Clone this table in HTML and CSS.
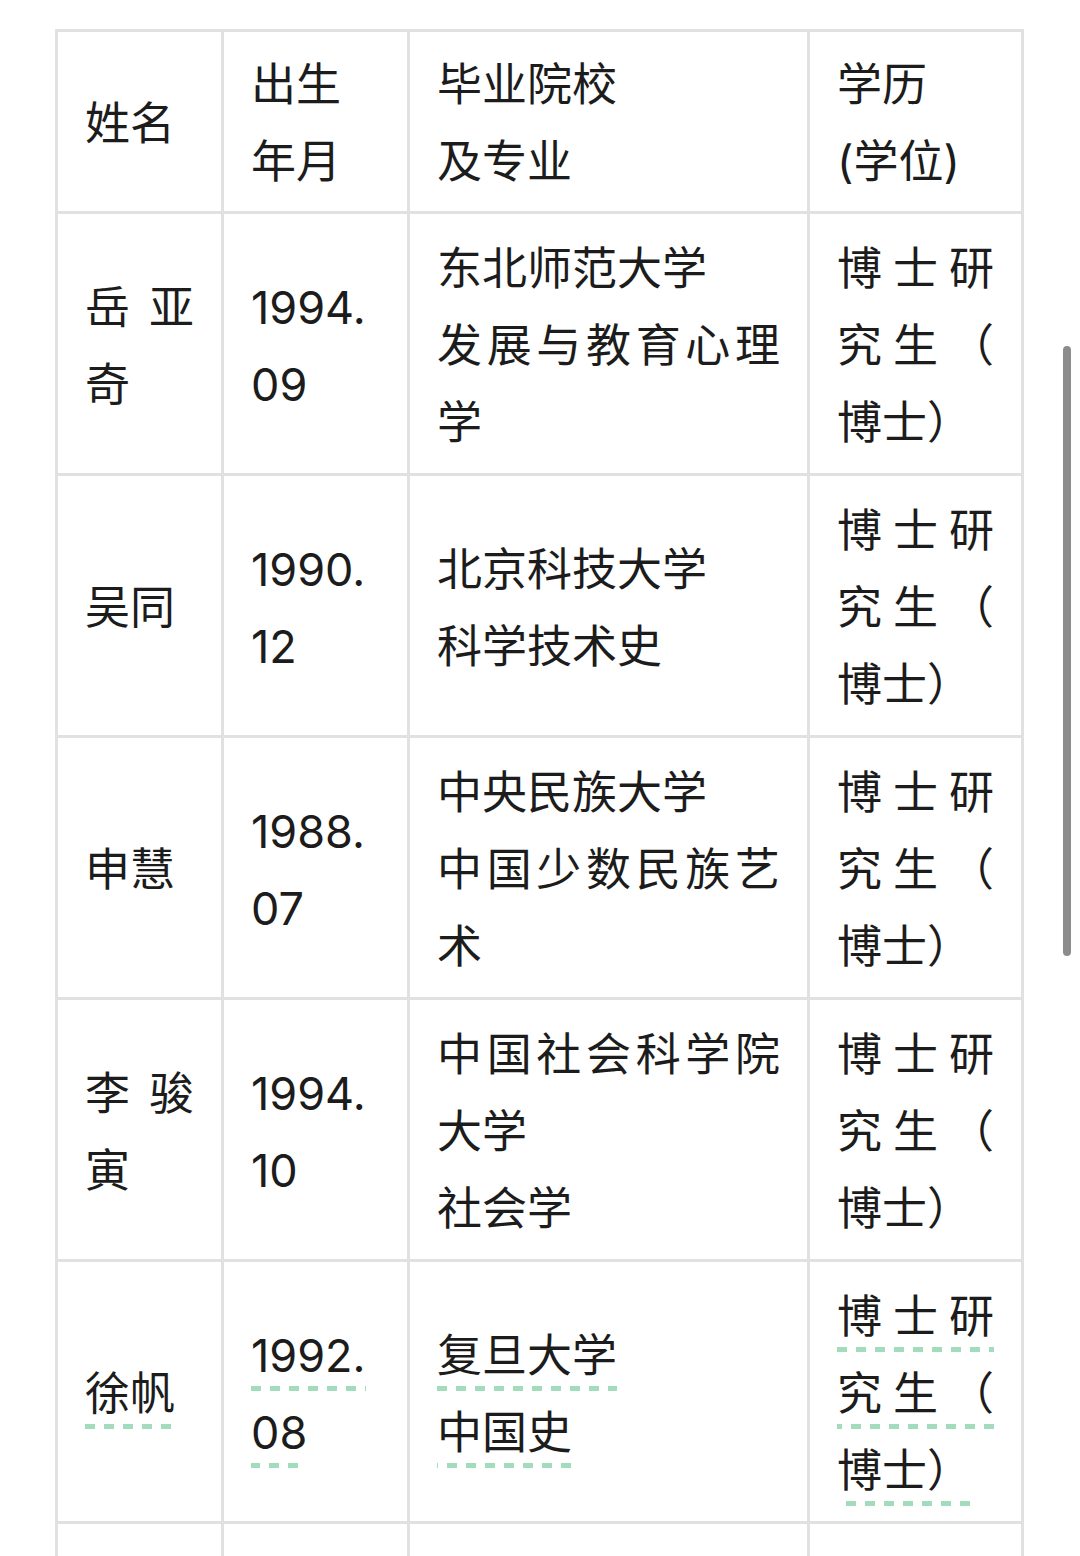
FILE: index.html
```html
<!DOCTYPE html>
<html lang="zh-CN">
<head>
<meta charset="utf-8">
<title>人员名单</title>
<link rel="stylesheet" href="styles.css">
</head>
<body>
<div class="page">
  <table class="roster">
    <colgroup>
      <col class="c-name">
      <col class="c-birth">
      <col class="c-school">
      <col class="c-degree">
    </colgroup>
    <thead>
      <tr>
        <th>姓名</th>
        <th>出生<br>年月</th>
        <th>毕业院校<br>及专业</th>
        <th>学历<br>(学位)</th>
      </tr>
    </thead>
    <tbody>
      <tr>
        <td>岳亚奇</td>
        <td>1994.<wbr>09</td>
        <td>东北师范大学<br>发展与教育心理学</td>
        <td class="deg">博士研究生（博士）</td>
      </tr>
      <tr>
        <td>吴同</td>
        <td>1990.<wbr>12</td>
        <td>北京科技大学<br>科学技术史</td>
        <td class="deg">博士研究生（博士）</td>
      </tr>
      <tr>
        <td>申慧</td>
        <td>1988.<wbr>07</td>
        <td>中央民族大学<br>中国少数民族艺术</td>
        <td class="deg">博士研究生（博士）</td>
      </tr>
      <tr>
        <td>李骏寅</td>
        <td>1994.<wbr>10</td>
        <td>中国社会科学院大学<br>社会学</td>
        <td class="deg">博士研究生（博士）</td>
      </tr>
      <tr>
        <td><span class="hl">徐帆</span></td>
        <td><span class="hl">1992.<wbr>08</span></td>
        <td><span class="hl">复旦大学<br>中国史</span></td>
        <td class="deg"><span class="hl">博士研究生（博士）</span></td>
      </tr>
      <tr class="more">
        <td></td>
        <td></td>
        <td></td>
        <td></td>
      </tr>
    </tbody>
  </table>
</div>
<div class="scrollbar"></div>
</body>
</html>
```

FILE: styles.css
```css
html, body {
  margin: 0;
  padding: 0;
  background: #ffffff;
}

body {
  font-family: "Inter", "Noto Sans CJK SC", sans-serif;
  color: #1c1c1c;
}

.page {
  padding: 29px 0 0 55px;
}

.roster {
  border-collapse: separate;
  border-spacing: 0;
  table-layout: fixed;
  width: 969px;
  border-top: 3px solid #e1e1e1;
  border-left: 3px solid #e1e1e1;
}

.c-name { width: 166px; }
.c-birth { width: 186px; }
.c-school { width: 400px; }
.c-degree { width: 214px; }

.roster th,
.roster td {
  border-right: 3px solid #e1e1e1;
  border-bottom: 3px solid #e1e1e1;
  padding: 16px 27px 12px;
  font-size: 45px;
  line-height: 77px;
  font-weight: 400;
  text-align: justify;
  vertical-align: middle;
}

.roster th {
  padding: 14px 27px 11px;
}

.roster .deg {
  line-break: anywhere;
}

.roster .more td {
  height: 240px;
}

.hl {
  padding-bottom: 8px;
  background-image: repeating-linear-gradient(to right, #a3dbbd 0 10px, transparent 10px 19px);
  background-size: 100% 5px;
  background-position: left bottom;
  background-repeat: no-repeat;
}

.scrollbar {
  position: fixed;
  top: 346px;
  right: 9px;
  width: 8px;
  height: 610px;
  border-radius: 4px;
  background: #8c8c8c;
}
```
